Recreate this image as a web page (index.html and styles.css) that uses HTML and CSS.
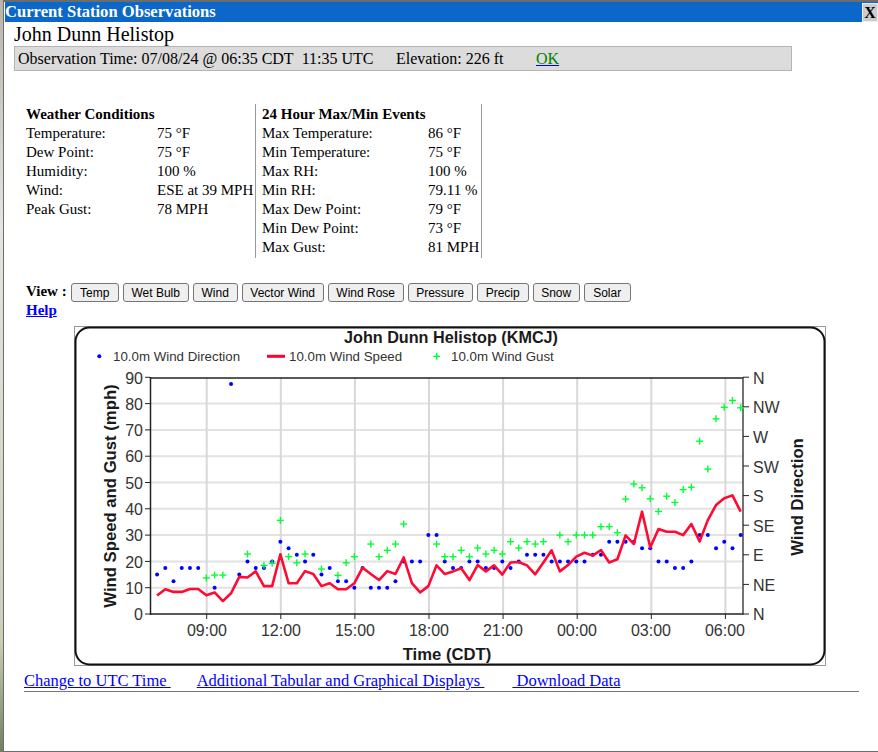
FILE: index.html
```html
<!DOCTYPE html>
<html lang="en">
<head>
    <meta charset="UTF-8">
    <title>Current Station Observations</title>
    <link rel="stylesheet" href="styles.css">
</head>
<body>
    <div class="window">
        <div class="title-bar">
            <span>Current Station Observations</span>
            <span class="close-box">X</span>
        </div>

        <div class="station-name">John Dunn Helistop</div>
        <div class="obs-bar">
            <span class="obs-time">Observation Time: 07/08/24 @ 06:35 CDT&nbsp; 11:35 UTC</span>
            <span class="obs-elev">Elevation: 226 ft</span>
            <a href="#" class="ok-link"><span>OK</span></a>
        </div>

        <!-- Current values -->
        <div class="tables">
            <div class="obs-col first">
                <table class="obs-table">
                    <tr><th colspan="2">Weather Conditions</th></tr>
                    <tr><td class="name">Temperature:</td><td>75 °F</td></tr>
                    <tr><td class="name">Dew Point:</td><td>75 °F</td></tr>
                    <tr><td class="name">Humidity:</td><td>100 %</td></tr>
                    <tr><td class="name">Wind:</td><td>ESE at 39 MPH</td></tr>
                    <tr><td class="name">Peak Gust:</td><td>78 MPH</td></tr>
                </table>
            </div>
            <div class="obs-col second">
                <table class="obs-table">
                    <tr><th colspan="2">24 Hour Max/Min Events</th></tr>
                    <tr><td class="name">Max Temperature:</td><td>86 °F</td></tr>
                    <tr><td class="name">Min Temperature:</td><td>75 °F</td></tr>
                    <tr><td class="name">Max RH:</td><td>100 %</td></tr>
                    <tr><td class="name">Min RH:</td><td>79.11 %</td></tr>
                    <tr><td class="name">Max Dew Point:</td><td>79 °F</td></tr>
                    <tr><td class="name">Min Dew Point:</td><td>73 °F</td></tr>
                    <tr><td class="name">Max Gust:</td><td>81 MPH</td></tr>
                </table>
            </div>
        </div>

        <div class="view-row">
            <b class="view-label">View :</b>
            <button>Temp</button>
            <button>Wet Bulb</button>
            <button>Wind</button>
            <button>Vector Wind</button>
            <button>Wind Rose</button>
            <button>Pressure</button>
            <button>Precip</button>
            <button>Snow</button>
            <button>Solar</button>
        </div>
        <a href="#" class="help-link">Help</a>

        <!-- Meteogram, the grid and series are added by chart.js -->
        <svg id="chart" class="chart" width="752" height="340" viewBox="0 0 752 340">
            <rect class="frame-outer" x="0.5" y="0.5" width="751" height="339"></rect>
            <rect class="frame-inner" x="1.5" y="1.5" width="749" height="337" rx="14"></rect>
            <g id="plot"></g>
            <text class="chart-title" x="377" y="17">John Dunn Helistop (KMCJ)</text>
            <text class="legend" x="39" y="35">10.0m Wind Direction</text>
            <text class="legend" x="215" y="35">10.0m Wind Speed</text>
            <text class="legend" x="377" y="35">10.0m Wind Gust</text>

            <g class="y-labels">
                <text x="69" y="57.5">90</text>
                <text x="69" y="84">80</text>
                <text x="69" y="110">70</text>
                <text x="69" y="136">60</text>
                <text x="69" y="162.5">50</text>
                <text x="69" y="189">40</text>
                <text x="69" y="215">30</text>
                <text x="69" y="241.5">20</text>
                <text x="69" y="268">10</text>
                <text x="69" y="294">0</text>
            </g>
            <g class="x-labels">
                <text x="133" y="310">09:00</text>
                <text x="207" y="310">12:00</text>
                <text x="281" y="310">15:00</text>
                <text x="355" y="310">18:00</text>
                <text x="429" y="310">21:00</text>
                <text x="503" y="310">00:00</text>
                <text x="577" y="310">03:00</text>
                <text x="651" y="310">06:00</text>
            </g>
            <g class="dir-labels">
                <text x="679" y="57.5">N</text>
                <text x="679" y="87">NW</text>
                <text x="679" y="117">W</text>
                <text x="679" y="146.5">SW</text>
                <text x="679" y="176">S</text>
                <text x="679" y="205.5">SE</text>
                <text x="679" y="235">E</text>
                <text x="679" y="264.5">NE</text>
                <text x="679" y="294">N</text>
            </g>
            <text class="axis-title" x="373" y="333.5">Time (CDT)</text>
            <text class="axis-title" transform="translate(42 170) rotate(-90)">Wind Speed and Gust (mph)</text>
            <text class="axis-title" transform="translate(729 171) rotate(-90)">Wind Direction</text>
        </svg>

        <div class="bottom-links">
            <a href="#">Change to UTC Time&nbsp;</a>
            <a href="#">Additional Tabular and Graphical Displays&nbsp;</a>
            <a href="#">&nbsp;Download Data</a>
        </div>
        <div class="rule"></div>
    </div>

    <script src="chart.js"></script>
</body>
</html>
```

FILE: styles.css
```css
body {
    margin: 0;
    height: 752px;
    overflow: hidden;
    font-family: "Liberation Serif", "Times New Roman", serif;
    color: #000;
    background: linear-gradient(#b9b4ad, #e4e4e0 30%, #d8d8c8 60%, #c9d0b8 85%, #6f7f60);
}
.window {
    box-sizing: border-box;
    height: 752px;
    margin-left: 3px;
    padding-left: 1px;
    background-color: #fff;
    border-top: 2px solid #6d6d6d;
    border-left: 1px solid #6d6d6d;
    border-bottom: 1px solid #6d6d6d;
}
.title-bar {
    display: flex;
    justify-content: space-between;
    align-items: center;
    height: 20px;
    background-color: #0b67c9;
    color: #fff;
    font-size: 16.6px;
    font-weight: bold;
}
.close-box {
    width: 14px;
    height: 17px;
    line-height: 17px;
    text-align: center;
    font-size: 16px;
    color: #000;
    background-color: #ccc;
    border: 1px solid #eee;
}
.station-name {
    font-size: 20px;
    line-height: 23px;
    margin: 1px 0 0 9px;
}
.obs-bar {
    display: flex;
    box-sizing: border-box;
    width: 778px;
    height: 25px;
    line-height: 23px;
    margin-left: 9px;
    padding-left: 3px;
    font-size: 16px;
    background-color: #dcdcdc;
    border: 1px solid #b4b4b4;
}
.obs-time {
    width: 378px;
}
.obs-elev {
    width: 140px;
}
.ok-link {
    color: #00f;
}
.ok-link span {
    color: #008000;
}
.tables {
    display: flex;
    height: 154px;
    margin: 33px 0 0 21px;
}
.obs-col {
    box-sizing: border-box;
    border-right: 1px solid #999;
}
.obs-col.first {
    width: 230px;
}
.obs-col.second {
    width: 226px;
    padding-left: 6px;
}
.obs-table {
    border-collapse: collapse;
    font-size: 15px;
}
.obs-table th {
    text-align: left;
    font-weight: bold;
    padding: 0;
    height: 20px;
    white-space: nowrap;
}
.obs-table td {
    padding: 0;
    height: 19px;
    white-space: nowrap;
}
.first .name {
    width: 131px;
}
.second .name {
    width: 166px;
}
.view-row {
    display: flex;
    gap: 4px;
    margin: 25px 0 0 21px;
    height: 19px;
    font-size: 15px;
    line-height: 17px;
}
.view-label {
    flex: 0 0 39px;
    white-space: nowrap;
}
.view-row button {
    box-sizing: border-box;
    width: 48px;
    height: 19px;
    padding: 0;
    font-family: "Liberation Sans", Arial, sans-serif;
    font-size: 12px;
    background-color: #efefef;
    border: 1px solid #767676;
    border-radius: 3px;
}
.view-row button:nth-of-type(2) { width: 66px; }
.view-row button:nth-of-type(3) { width: 45px; }
.view-row button:nth-of-type(4) { width: 82px; }
.view-row button:nth-of-type(5) { width: 76px; }
.view-row button:nth-of-type(6) { width: 65px; }
.view-row button:nth-of-type(7) { width: 52px; }
.view-row button:nth-of-type(8) { width: 47px; }
.view-row button:nth-of-type(9) { width: 47px; }
.help-link {
    display: block;
    width: 40px;
    height: 24px;
    margin-left: 21px;
    font-size: 15px;
    line-height: 17px;
    font-weight: bold;
    color: #00f;
}
.chart {
    display: block;
    margin-left: 69px;
    font-family: "Liberation Sans", Arial, sans-serif;
    font-size: 16px;
}
.frame-outer {
    fill: #fff;
    stroke: #999;
}
.frame-inner {
    fill: #fff;
    stroke: #111;
    stroke-width: 2;
}
.chart-title, .axis-title {
    font-weight: bold;
    text-anchor: middle;
    fill: #1a1a1a;
}
.chart-title {
    font-size: 16.2px;
}
.axis-title {
    font-size: 16.7px;
}
.legend {
    font-size: 13.3px;
    fill: #333;
}
.y-labels text {
    text-anchor: end;
    fill: #333;
}
.x-labels text {
    text-anchor: middle;
    fill: #333;
}
.dir-labels text {
    fill: #333;
}
.bottom-links {
    display: flex;
    height: 19px;
    margin: 5px 0 0 19px;
    font-size: 16.5px;
    line-height: 19px;
}
.bottom-links a {
    color: #00f;
    margin-right: 26px;
}
.bottom-links a:nth-child(2) {
    margin-right: 28px;
}
.rule {
    width: 835px;
    margin: 1px 0 0 19px;
    border-top: 1px solid #777;
}
```

FILE: chart.js
```js
// samples every 20 minutes, oldest first
var speed = [7, 9.4, 8.4, 8.4, 9.5, 9.5, 7.1, 8.2, 4.9, 7.9, 14.1, 13.9, 16.2, 10.6, 10.6, 22.7, 11.7, 11.7,
    16.3, 15.2, 10.6, 11.7, 9.4, 9.4, 11.7, 17.6, 15.2, 12.9, 16.3, 15.2, 21.5, 11.7, 8.2, 10.6, 18.5, 15.2,
    16.2, 17.4, 12.9, 18.6, 16.2, 18.5, 15, 19.6, 19.8, 18.5, 15.1, 19.6, 24.2, 16.2, 18.6, 21.8, 23.3, 22.2,
    24.3, 19.6, 20.8, 29.9, 26.6, 38.9, 25.3, 32.3, 31.3, 31.3, 30, 34.2, 27.6, 35.7, 41.4, 44, 45.1, 38.9];

// direction is plotted on the mph scale (degrees / 4)
var dir = [15, 17.5, 12.5, 17.5, 17.5, 17.5, null, 10, null, 87.5, 15, 20, 17.5, 17.5, 20, 27.5, 25, 22.5,
    20, 22.5, 15, 17.5, 12.5, 12.5, 10, 17.5, 10, 10, 10, 12.5, 20, 20, 20, 30, 30, 20,
    17.5, 17.5, 20, 20, 17.5, 17.5, 20, 17.5, 20, 22.5, 22.5, 22.5, 20, 20, 20, 20, 20, 22.5,
    22.5, 27.5, 27.5, 27.5, 27.5, 25, 25, 20, 20, 17.5, 17.5, 20, 30, 30, 25, 27.5, 25, 30];

var gust = [null, null, null, null, null, null, 13.7, 14.8, 14.8, null, null, 22.8, null, 18.5, 19.3, 35.6, 21.8, 19.5,
    22.8, null, 17.1, null, 14.7, 19.5, 21.8, null, 26.6, 21.8, 24.2, 26.6, 34.2, null, null, null, 26.6, 21.8,
    21.8, 24.2, 21.8, 25.1, 22.8, 24.2, 22.8, 27.5, 25.1, 27.5, 26.6, 27.5, null, 30, 27.5, 30, 30, 30,
    33.2, 33.2, 30.9, 43.7, 49.4, 48, 43.8, 39, 44.8, 42.4, 47.3, 48.2, 65.7, 55.1, 74.2, 78.6, 81.2, 78.4];

var SVG_NS = "http://www.w3.org/2000/svg";
var plot = document.getElementById("plot");

function add(tag, attrs) {
    var el = document.createElementNS(SVG_NS, tag);
    for (var k in attrs) el.setAttribute(k, attrs[k]);
    plot.appendChild(el);
}

function line(x1, y1, x2, y2, color, width) {
    add("line", { x1: x1, y1: y1, x2: x2, y2: y2, stroke: color, "stroke-width": width });
}

function xPos(i) { return 666.7 - 8.22 * (71 - i); }
function yPos(v) { return 288 - v * 2.63; }

function dot(x, y, color) {
    add("circle", { cx: x, cy: y, r: 2, fill: color });
}

function plus(x, y, color) {
    line(x - 3.5, y, x + 3.5, y, color, 1.4);
    line(x, y - 3.5, x, y + 3.5, color, 1.4);
}

// grid
for (var v = 10; v < 90; v += 10) line(76, yPos(v), 669, yPos(v), "#e2e2e2", 2);
for (var k = 0; k < 8; k++) {
    var tx = 132.7 + 74.1 * k;
    line(tx, 52, tx, 288, "#d8d8d8", 2);
    line(tx, 288, tx, 293, "#222", 1);
}

// axes
line(76, 52, 669, 52, "#222", 1.5);
line(76, 288, 669, 288, "#222", 1.5);
line(76.5, 51, 76.5, 289, "#222", 1.5);
line(669, 51, 669, 289, "#444", 1.5);
for (var v = 0; v <= 90; v += 10) line(71, yPos(v), 76, yPos(v), "#222", 1);
for (var d = 0; d <= 8; d++) line(669, 288 - d * 29.6, 675, 288 - d * 29.6, "#222", 1);

// legend keys
dot(25.3, 30.3, "#0000ff");
line(193, 30.3, 211, 30.3, "#ff0033", 3);
plus(362.7, 30.3, "#00ff33");

// series
dir.forEach(function (v, i) {
    if (v !== null) dot(xPos(i), yPos(v), "#0000ff");
});
add("polyline", {
    points: speed.map(function (v, i) { return xPos(i) + "," + yPos(v); }).join(" "),
    fill: "none",
    stroke: "#ff0a33",
    "stroke-width": 2.6,
    "stroke-linejoin": "round"
});
gust.forEach(function (v, i) {
    if (v !== null) plus(xPos(i), yPos(v), "#00ff33");
});
```
